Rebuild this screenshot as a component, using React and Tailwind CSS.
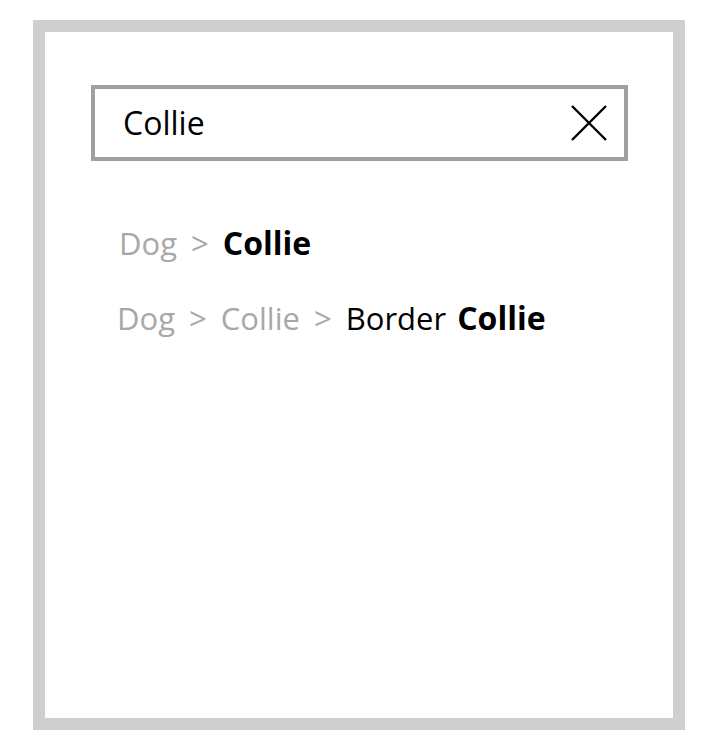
import React from 'react'

function Sep() {
  return <span className="mx-[3px]">&gt;</span>
}

function App() {
  return (
    <div className="w-[728px] h-[752px] bg-white pt-5 pl-[33px]" style={{ fontFamily: '"Open Sans", "Noto Sans", sans-serif' }}>
      <div className="w-[652px] h-[710px] border-[12px] border-[#cfcfcf] pt-[53px] pl-[46px]">
        <div className="w-[537px] h-[76px] border-4 border-[#a0a0a0] flex items-center justify-between pl-7 pr-4">
          <span className="text-[32px] text-black">Collie</span>
          <svg width="38" height="38" viewBox="0 0 38 38" fill="none" stroke="black" strokeWidth="2.4">
            <path d="M2 2L36 36M36 2L2 36" />
          </svg>
        </div>
        <div className="pl-[28px] pt-[62px] flex flex-col gap-[35px] text-[31px] leading-[40px] [word-spacing:3px]">
          <div>
            <span className="text-[#a8a8a8]">Dog <Sep /> </span>
            <span className="font-bold text-black text-[32px]">Collie</span>
          </div>
          <div className="-ml-[2px]">
            <span className="text-[#a8a8a8]">Dog <Sep /> Collie <Sep /> </span>
            <span className="text-black">Border </span>
            <span className="font-bold text-black text-[32px]">Collie</span>
          </div>
        </div>
      </div>
    </div>
  )
}

export default App
